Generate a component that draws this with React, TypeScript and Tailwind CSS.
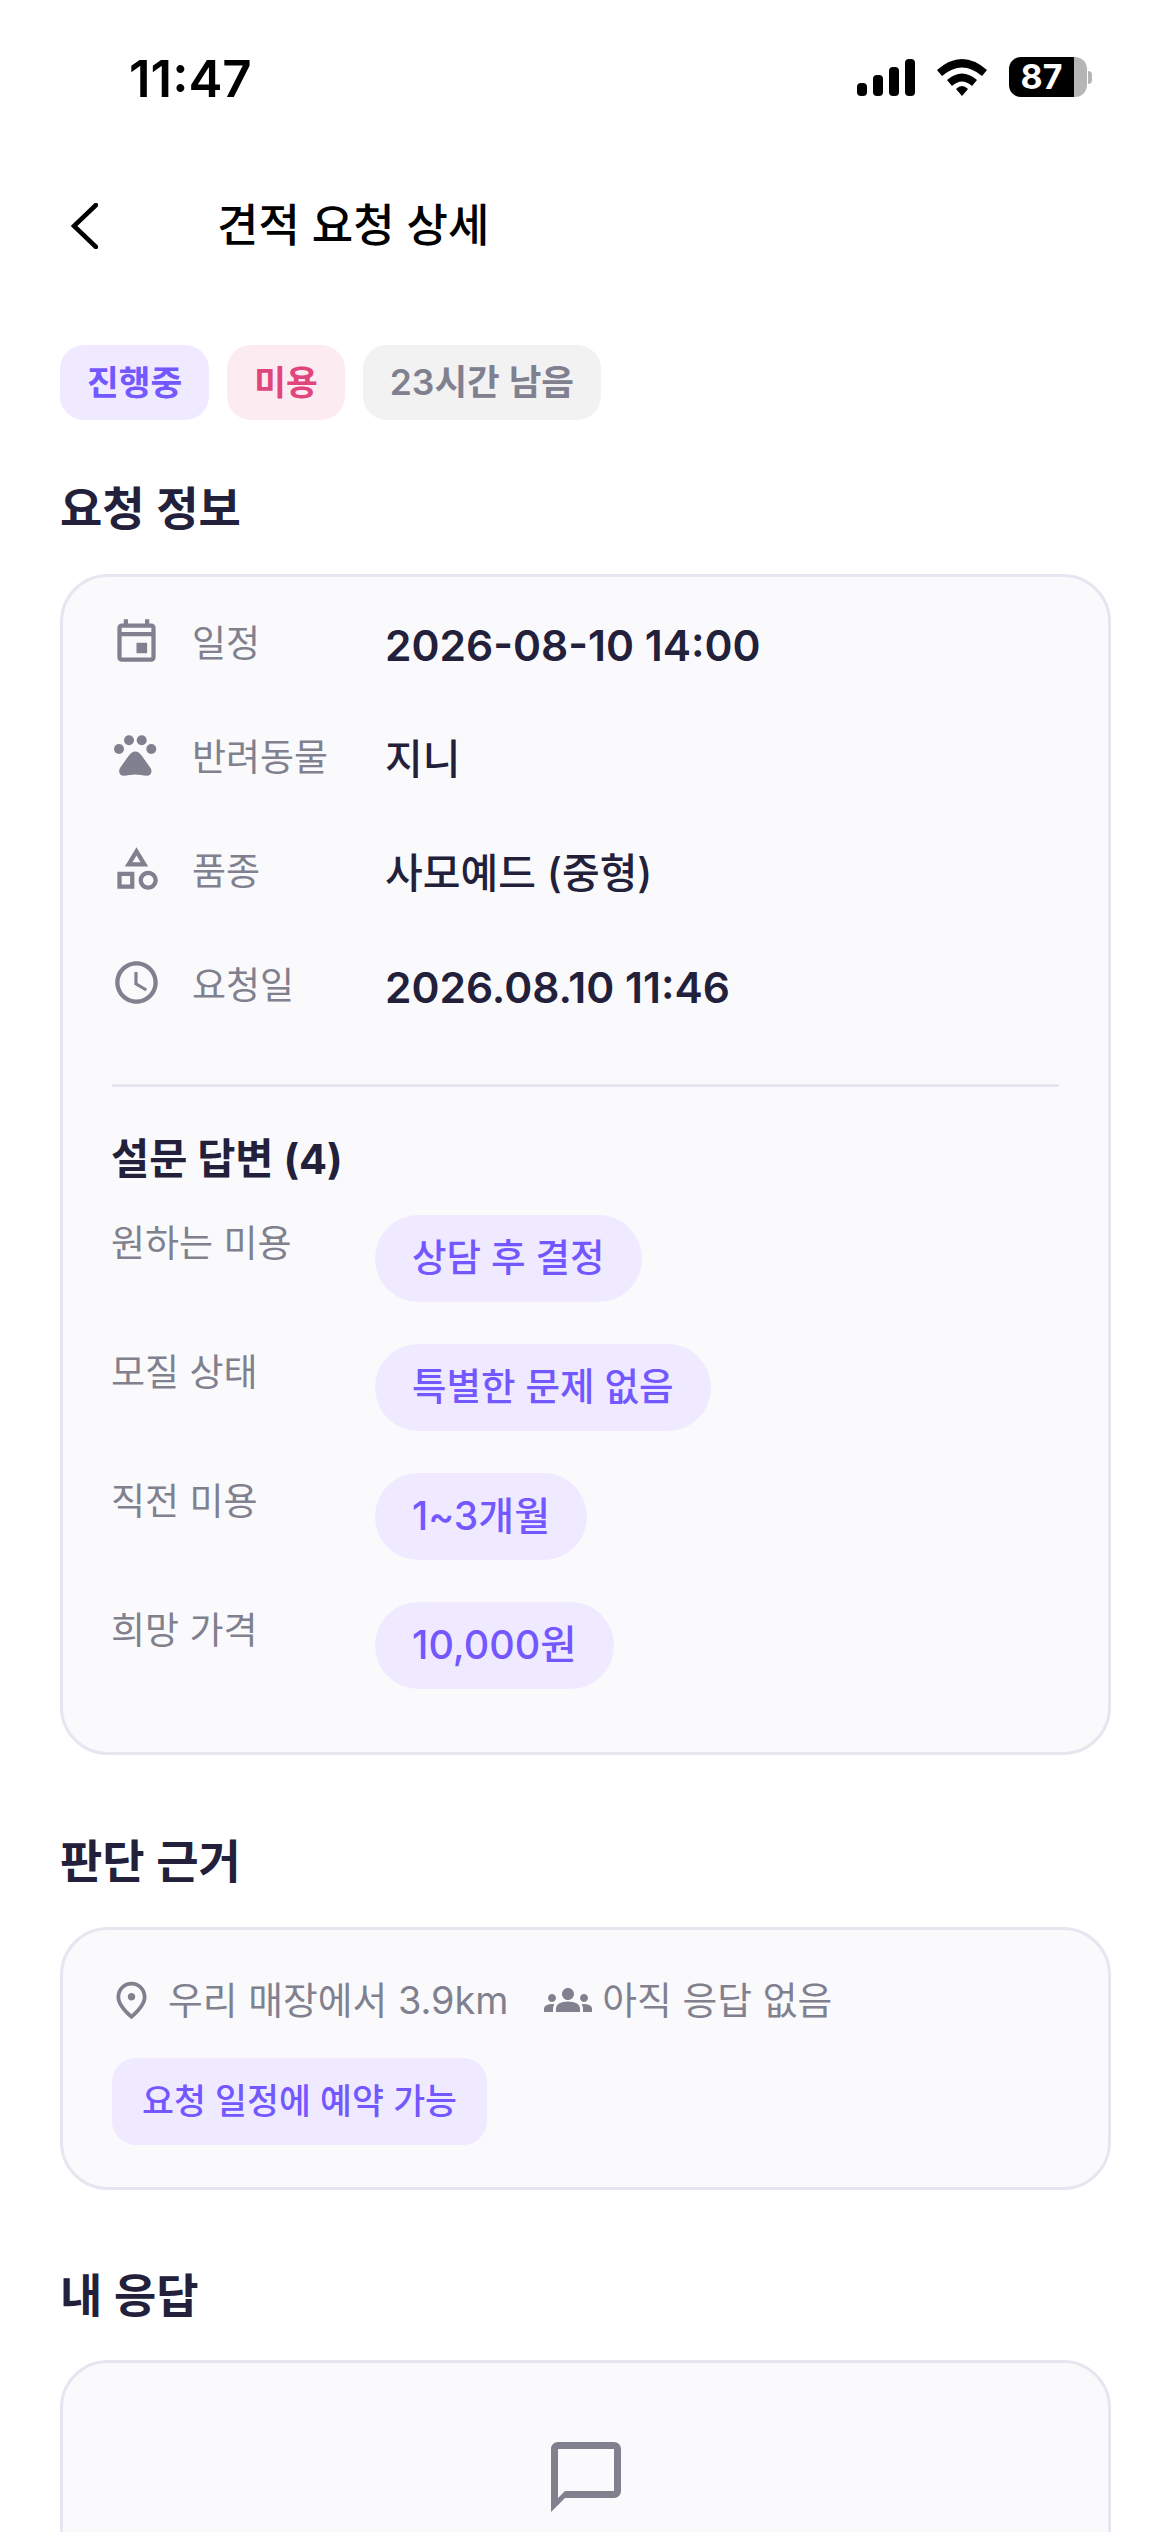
import React from "react"
import {
  MdOutlineEvent,
  MdOutlineCategory,
  MdAccessTime,
  MdOutlinePlace,
  MdGroups,
  MdOutlineChatBubbleOutline,
} from "react-icons/md"

const PawIcon = () => (
  <svg width="51" height="51" viewBox="0 -5 51 51" fill="currentColor">
    <circle cx="8" cy="15" r="5" />
    <circle cx="18" cy="6.3" r="5" />
    <circle cx="30.7" cy="6.3" r="5" />
    <circle cx="40.3" cy="15" r="5" />
    <path d="M24.3 17.5C27 17.5 29 19.5 31 22L39.5 34C42 38 39.5 41.7 36 41.7C32 41.7 28 40.5 24.3 40.5C20.5 40.5 16.5 41.7 12.5 41.7C9 41.7 6.8 38 9 34L17.5 22C19.5 19.5 21.5 17.5 24.3 17.5Z" />
  </svg>
)

const infoRows = [
  { icon: <MdOutlineEvent size={51} />, label: "일정", value: "2026-08-10 14:00", size: "text-[42.5px] font-semibold" },
  { icon: <PawIcon />, label: "반려동물", value: "지니", size: "text-[41px] font-medium" },
  { icon: <MdOutlineCategory size={51} />, label: "품종", value: "사모예드 (중형)", size: "text-[41px] font-medium" },
  { icon: <MdAccessTime size={51} />, label: "요청일", value: "2026.08.10 11:46", size: "text-[42.5px] font-semibold" },
]

const surveyRows = [
  { label: "원하는 미용", value: "상담 후 결정", size: "text-[37.5px]" },
  { label: "모질 상태", value: "특별한 문제 없음", size: "text-[37.5px]" },
  { label: "직전 미용", value: "1~3개월", size: "text-[39px]" },
  { label: "희망 가격", value: "10,000원", size: "text-[39.5px]" },
]

const StatusBar = () => (
  <div className="flex justify-between h-[159px] pt-[50px] pl-[129px] pr-[78px]">
    <span className="text-[51px] leading-[58px] font-semibold text-black">11:47</span>
    <div className="flex items-start pt-[7px]">
      {/* SIGNAL */}
      <svg width="58" height="37" viewBox="0 0 58 37" className="mt-[2px]">
        <rect x="0" y="24" width="10" height="13" rx="4" />
        <rect x="16" y="16" width="10" height="21" rx="4" />
        <rect x="32" y="8" width="10" height="29" rx="4" />
        <rect x="48" y="0" width="10" height="37" rx="4" />
      </svg>
      {/* WIFI */}
      <svg width="50" height="37" viewBox="0 0 50 37" className="ml-[22px] mt-[2px]">
        <path d="M0 11 Q25 -11 50 11 L45 17 Q25 0 5 17 Z" />
        <path d="M10 21 Q25 8 40 21 L35 27 Q25 18 15 27 Z" />
        <path d="M19 30 Q25 24 31 30 L25 37 Z" />
      </svg>
      {/* BATTERY */}
      <div className="flex items-center ml-[22px]">
        <div className="flex w-[78px] h-[40px] rounded-[12px] overflow-hidden">
          <div className="w-[65px] bg-black flex items-center justify-center text-white text-[34px] leading-none font-bold">
            87
          </div>
          <div className="flex-1 bg-[#b5b5b5]" />
        </div>
        <div className="w-[4px] h-[13px] ml-[1px] rounded-r-full bg-[#b5b5b5]" />
      </div>
    </div>
  </div>
)

const SectionTitle = ({ children }: { children: React.ReactNode }) => (
  <h2 className="text-[46px] leading-[60px] font-semibold text-[#22203a]">{children}</h2>
)

export default function App() {
  return (
    <div className="w-[1170px] h-[2532px] overflow-hidden bg-white [font-family:Inter,'Noto_Sans_CJK_KR',sans-serif]">
      <StatusBar />

      {/* HEADER */}
      <div className="flex items-center h-[132px] pl-[71px] pt-[1px]">
        <svg width="27" height="46" viewBox="0 0 27 46" fill="none" stroke="black" strokeWidth="4.5">
          <path d="M25 2 L3 23 L25 44" strokeLinecap="round" strokeLinejoin="miter" />
        </svg>
        <h1 className="ml-[119px] text-[45px] font-medium text-black">견적 요청 상세</h1>
      </div>

      <div className="pl-[60px] pr-[59px] pt-[54px]">
        {/* CHIPS */}
        <div className="flex gap-[18px] text-[34.5px] font-semibold">
          <span className="flex items-center h-[75px] px-[27px] rounded-[24px] bg-[#efeaff] text-[#7357ff]">진행중</span>
          <span className="flex items-center h-[75px] px-[27px] rounded-[24px] bg-[#fcebf1] text-[#e0457b]">미용</span>
          <span className="flex items-center h-[75px] px-[27px] rounded-[24px] bg-[#f2f2f3] text-[35.5px] text-[#80808f]">23시간 남음</span>
        </div>

        <div className="mt-[58px]">
          <SectionTitle>요청 정보</SectionTitle>
        </div>

        {/* REQUEST CARD */}
        <div className="mt-[36px] h-[1181px] pl-[48px] pr-[49px] pt-[45px] border-[3px] border-[#e6e5f0] rounded-[48px] bg-[#fafafc]">
          <div className="flex flex-col gap-[66px]">
            {infoRows.map((row) => (
              <div key={row.label} className="flex items-center h-[48px]">
                <div className="w-[51px] h-[51px] -mt-[11px] text-[#80808f]">{row.icon}</div>
                <span className="w-[193px] ml-[30px] -mt-[4px] text-[37px] text-[#80808f]">{row.label}</span>
                <span className={`${row.size} text-[#22203a]`}>{row.value}</span>
              </div>
            ))}
          </div>

          <div className="mt-[72px] ml-[1px] h-[3px] bg-[#e6e5f0]" />

          <h3 className="mt-[47px] text-[41.5px] leading-[50px] font-bold text-[#22203a]">설문 답변 (4)</h3>

          <div className="flex flex-col gap-[42px] mt-[31px]">
            {surveyRows.map((row) => (
              <div key={row.label} className="flex items-start">
                <span className="w-[264px] pt-[4px] text-[37px] leading-[50px] text-[#80808f]">{row.label}</span>
                <span className={`flex items-center h-[87px] px-[37px] rounded-full bg-[#efeaff] ${row.size} font-medium text-[#7357ff]`}>
                  {row.value}
                </span>
              </div>
            ))}
          </div>
        </div>

        <div className="mt-[76px]">
          <SectionTitle>판단 근거</SectionTitle>
        </div>

        {/* REASON CARD */}
        <div className="mt-[36px] h-[263px] px-[49px] pt-[46px] border-[3px] border-[#e6e5f0] rounded-[48px] bg-[#fafafc]">
          <div className="flex items-center h-[48px] text-[37.8px] text-[#80808f]">
            <MdOutlinePlace size={45} className="-ml-[3px]" />
            <span className="ml-[14px]">우리 매장에서 3.9km</span>
            <MdGroups size={48} className="ml-[36px]" />
            <span className="ml-[10px]">아직 응답 없음</span>
          </div>
          <div className="mt-[34px]">
            <span className="inline-flex items-center h-[87px] px-[30px] rounded-[24px] bg-[#efeaff] text-[34.7px] font-medium text-[#7357ff]">
              요청 일정에 예약 가능
            </span>
          </div>
        </div>

        <div className="mt-[75px]">
          <SectionTitle>내 응답</SectionTitle>
        </div>

        {/* RESPONSE CARD */}
        <div className="mt-[35px] h-[400px] pt-[72px] flex justify-center border-[3px] border-[#e6e5f0] rounded-[48px] bg-[#fafafc] text-[#80808f]">
          <MdOutlineChatBubbleOutline size={84} />
        </div>
      </div>
    </div>
  )
}
